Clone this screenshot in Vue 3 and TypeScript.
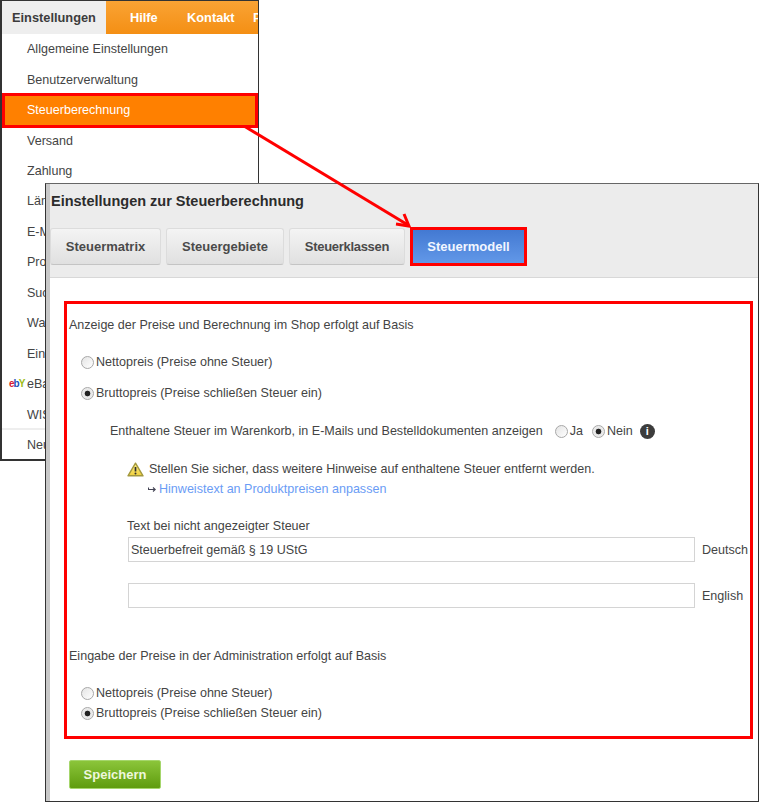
<script setup lang="ts">
const menuItems = [
  { label: 'Allgemeine Einstellungen' },
  { label: 'Benutzerverwaltung' },
  { label: 'Steuerberechnung', active: true },
  { label: 'Versand' },
  { label: 'Zahlung' },
  { label: 'Län' },
  { label: 'E-M' },
  { label: 'Pro' },
  { label: 'Suc' },
  { label: 'Wa' },
  { label: 'Ein' },
  { label: 'eBa', ebay: true },
  { label: 'WIS' },
  { label: 'Neu', sep: true },
]
const tabs = ['Steuermatrix', 'Steuergebiete', 'Steuerklassen']
</script>

<template>
  <div class="stage">
    <section class="menu">
      <nav class="topbar">
        <span class="top-current">Einstellungen</span>
        <span class="top-link hilfe">Hilfe</span>
        <span class="top-link kontakt">Kontakt</span>
        <span class="top-link">P</span>
      </nav>
      <ul class="items">
        <li
          v-for="item in menuItems"
          :key="item.label"
          class="item"
          :class="{ active: item.active, sep: item.sep }"
        >
          <span v-if="item.ebay" class="ebay"><i class="e1">e</i><i class="e2">b</i><i class="e3">Y</i></span>{{ item.label }}
        </li>
      </ul>
    </section>

    <section class="panel">
      <header class="panel-head">
        <h1 class="title">Einstellungen zur Steuerberechnung</h1>
        <div class="tabs">
          <button v-for="t in tabs" :key="t" class="tab">{{ t }}</button>
          <button class="tab tab-active">Steuermodell</button>
        </div>
      </header>
      <div class="panel-body">
        <form class="form" @submit.prevent>
          <p class="lead">Anzeige der Preise und Berechnung im Shop erfolgt auf Basis</p>
          <label class="radio r-first"><span class="dot"></span>Nettopreis (Preise ohne Steuer)</label>
          <label class="radio r-second"><span class="dot on"></span>Bruttopreis (Preise schließen Steuer ein)</label>

          <div class="included">
            <span class="included-text">Enthaltene Steuer im Warenkorb, in E-Mails und Bestelldokumenten anzeigen</span>
            <label class="radio inline"><span class="dot"></span>Ja</label>
            <label class="radio inline"><span class="dot on"></span>Nein</label>
            <span class="info">i</span>
          </div>

          <div class="warn">
            <svg class="warn-icon" width="17" height="15" viewBox="0 0 17 15">
              <defs>
                <linearGradient id="warnFill" x1="0" y1="0" x2="0" y2="1">
                  <stop offset="0" stop-color="#fdf08a" />
                  <stop offset="1" stop-color="#f0cf3c" />
                </linearGradient>
              </defs>
              <path d="M8.5 1.2 L16 13.8 H1 Z" fill="url(#warnFill)" stroke="#a3983e" stroke-width="1.4" stroke-linejoin="round" />
              <path d="M8.5 5v4.5" stroke="#2f2f2f" stroke-width="1.7" />
              <circle cx="8.5" cy="11.5" r="1" fill="#2f2f2f" />
            </svg>
            <span>Stellen Sie sicher, dass weitere Hinweise auf enthaltene Steuer entfernt werden.</span>
          </div>
          <div class="hint-link">
            <svg class="hook" width="8" height="7" viewBox="0 0 8 7">
              <path d="M0.5 1.5 V3.5 H7 M5 1.5 L7.2 3.5 L5 5.5" fill="none" stroke="#445" stroke-width="1.1" />
            </svg>
            <a>Hinweistext an Produktpreisen anpassen</a>
          </div>

          <div class="field-label">Text bei nicht angezeigter Steuer</div>
          <div class="field">
            <input class="input" value="Steuerbefreit gemäß § 19 UStG" />
            <span class="lang">Deutsch</span>
          </div>
          <div class="field second">
            <input class="input" value="" />
            <span class="lang">English</span>
          </div>

          <p class="lead lead2">Eingabe der Preise in der Administration erfolgt auf Basis</p>
          <label class="radio r-first"><span class="dot"></span>Nettopreis (Preise ohne Steuer)</label>
          <label class="radio r-tight"><span class="dot on"></span>Bruttopreis (Preise schließen Steuer ein)</label>
        </form>
        <button class="save">Speichern</button>
      </div>
    </section>

    <svg class="arrow" width="760" height="802" viewBox="0 0 760 802">
      <path d="M244 126 L408 225" stroke="#f00" stroke-width="3" fill="none" />
      <path d="M396 224 L409 226 L404 214" stroke="#f00" stroke-width="3" fill="none" />
    </svg>
  </div>
</template>

<style>
html, body { margin: 0; background: #fff; }
</style>

<style scoped>
.stage {
  position: relative;
  width: 760px;
  height: 802px;
  overflow: hidden;
  background: #fff;
  font-family: "Liberation Sans", Arial, sans-serif;
  font-size: 12.55px;
  color: #444;
}
.menu {
  position: absolute;
  left: 0;
  top: 0;
  width: 259px;
  height: 461px;
  box-sizing: border-box;
  border: 1px solid #333;
  border-left-width: 2px;
  border-bottom-width: 2px;
  background: #fff;
}
.topbar {
  display: flex;
  height: 33px;
  background: linear-gradient(#faa334, #f48f14);
  overflow: hidden;
  font-size: 12.8px;
  font-weight: bold;
  color: #fff;
  align-items: center;
}
.top-current {
  flex: none;
  width: 104px;
  height: 33px;
  line-height: 33px;
  padding-left: 10px;
  box-sizing: border-box;
  background: #eee;
  color: #3c3c3c;
}
.top-link { flex: none; white-space: nowrap; }
.hilfe { margin-left: 24px; width: 57px; }
.kontakt { width: 66px; }
.items {
  list-style: none;
  margin: 0;
  padding: 0.3px 0 0;
}
.item {
  height: 30.45px;
  line-height: 30.45px;
  padding-left: 25px;
  box-sizing: border-box;
  color: #444;
  white-space: nowrap;
  position: relative;
}
.item.active {
  height: 34.45px;
  line-height: 34.45px;
  margin: -2px 0;
  background: #ff8000;
  color: #fff;
  outline: 3px solid #f00;
  outline-offset: -3px;
  z-index: 1;
}
.item.sep {
  height: 32.45px;
  line-height: 31.45px;
  margin-top: -2px;
  border-top: 2px solid #eee;
}
.ebay {
  position: absolute;
  left: 7px;
  top: 0;
  font-size: 10px;
  font-weight: bold;
  letter-spacing: -1px;
}
.ebay i { font-style: normal; }
.e1 { color: #d8202f; }
.e2 { color: #1d4fb8; }
.e3 { color: #9bbb12; }

.panel {
  position: absolute;
  left: 45px;
  top: 183px;
  width: 714px;
  height: 619px;
  box-sizing: border-box;
  border: 1px solid #333;
  border-top-color: #666;
  background: #fff;
  display: flex;
  flex-direction: column;
  box-shadow: inset 4px 0 0 #c8c8c8;
}
.panel-head {
  margin-left: 4px;
  height: 94px;
  background: #ececec;
  box-sizing: border-box;
  padding-top: 9px;
  border-bottom: 1px solid #d8d8d8;
}
.title {
  margin: 0;
  padding-left: 1px;
  font-size: 14.5px;
  line-height: 16px;
  font-weight: bold;
  color: #2c2c2c;
}
.tabs {
  display: flex;
  gap: 5px;
  margin-top: 19px;
}
.tab {
  font: bold 13px "Liberation Sans", Arial, sans-serif;
  height: 37px;
  padding: 0;
  border: 1px solid #dcdcdc;
  border-bottom-color: #c4c4c4;
  border-radius: 3px;
  background: linear-gradient(#f4f4f4, #e0e0e0);
  color: #4a4a4a;
}
.tab:nth-child(1) { width: 111px; }
.tab:nth-child(2) { width: 118px; }
.tab:nth-child(3) { width: 116px; letter-spacing: -0.3px; }
.tab.tab-active {
  width: 117px;
  height: 39px;
  margin-top: -1px;
  background: linear-gradient(#4379d2, #6298e8);
  color: #f2f6ff;
  border: 3px solid #f00;
  border-radius: 0;
}
.panel-body {
  margin-left: 4px;
  padding: 23px 0 0 14px;
}
.form {
  display: flex;
  flex-direction: column;
  align-items: flex-start;
  width: 689px;
  height: 438px;
  box-sizing: border-box;
  border: 3px solid #f00;
  padding: 13px 0 0 2px;
  line-height: 16px;
}
.lead { margin: 0; }
.lead2 { margin-top: 40px; }
.radio { display: flex; align-items: center; white-space: nowrap; }
.r-first { margin: 21px 0 0 12px; }
.r-second { margin: 15px 0 0 12px; }
.r-tight { margin: 4px 0 0 12px; }
.dot {
  display: inline-block;
  width: 13px;
  height: 13px;
  box-sizing: border-box;
  margin-right: 2px;
  border-radius: 50%;
  border: 1px solid #a8a8a8;
  background: linear-gradient(135deg, #e4e4e4, #fff);
}
.dot.on {
  background: radial-gradient(circle, #222 0 2.5px, #e6e6e6 3.2px, #f4f4f4);
}
.included {
  display: flex;
  align-items: center;
  gap: 9px;
  margin: 22px 0 0 41px;
  white-space: nowrap;
}
.included-text { padding-right: 3px; }
.info {
  width: 15px;
  height: 15px;
  margin-left: -2px;
  border-radius: 50%;
  background: #3c3c3c;
  color: #fff;
  font-size: 11px;
  font-weight: bold;
  line-height: 15px;
  text-align: center;
}
.warn {
  display: flex;
  align-items: center;
  gap: 5px;
  margin: 22px 0 0 58px;
  white-space: nowrap;
}
.hint-link {
  display: flex;
  align-items: center;
  gap: 3px;
  margin: 4px 0 0 79px;
  white-space: nowrap;
  color: #6a9cf5;
}
.field-label { margin: 21px 0 0 58px; }
.field {
  display: flex;
  align-items: center;
  gap: 7px;
  margin: 3px 0 0 59px;
}
.field.second { margin-top: 21px; }
.input {
  width: 567px;
  height: 25px;
  box-sizing: border-box;
  border: 1px solid #d4d4d4;
  padding: 0 2px;
  font: 12.55px "Liberation Sans", Arial, sans-serif;
  color: #444;
}
.lang { white-space: nowrap; }
.save {
  display: block;
  margin: 21px 0 0 5px;
  width: 92px;
  height: 29px;
  border: 1px solid #a5d66b;
  border-radius: 2px;
  background: linear-gradient(#8bc53a, #5f9c0e);
  color: #eef7dc;
  font: bold 13px "Liberation Sans", Arial, sans-serif;
}
.arrow {
  position: absolute;
  left: 0;
  top: 0;
  pointer-events: none;
}
</style>
